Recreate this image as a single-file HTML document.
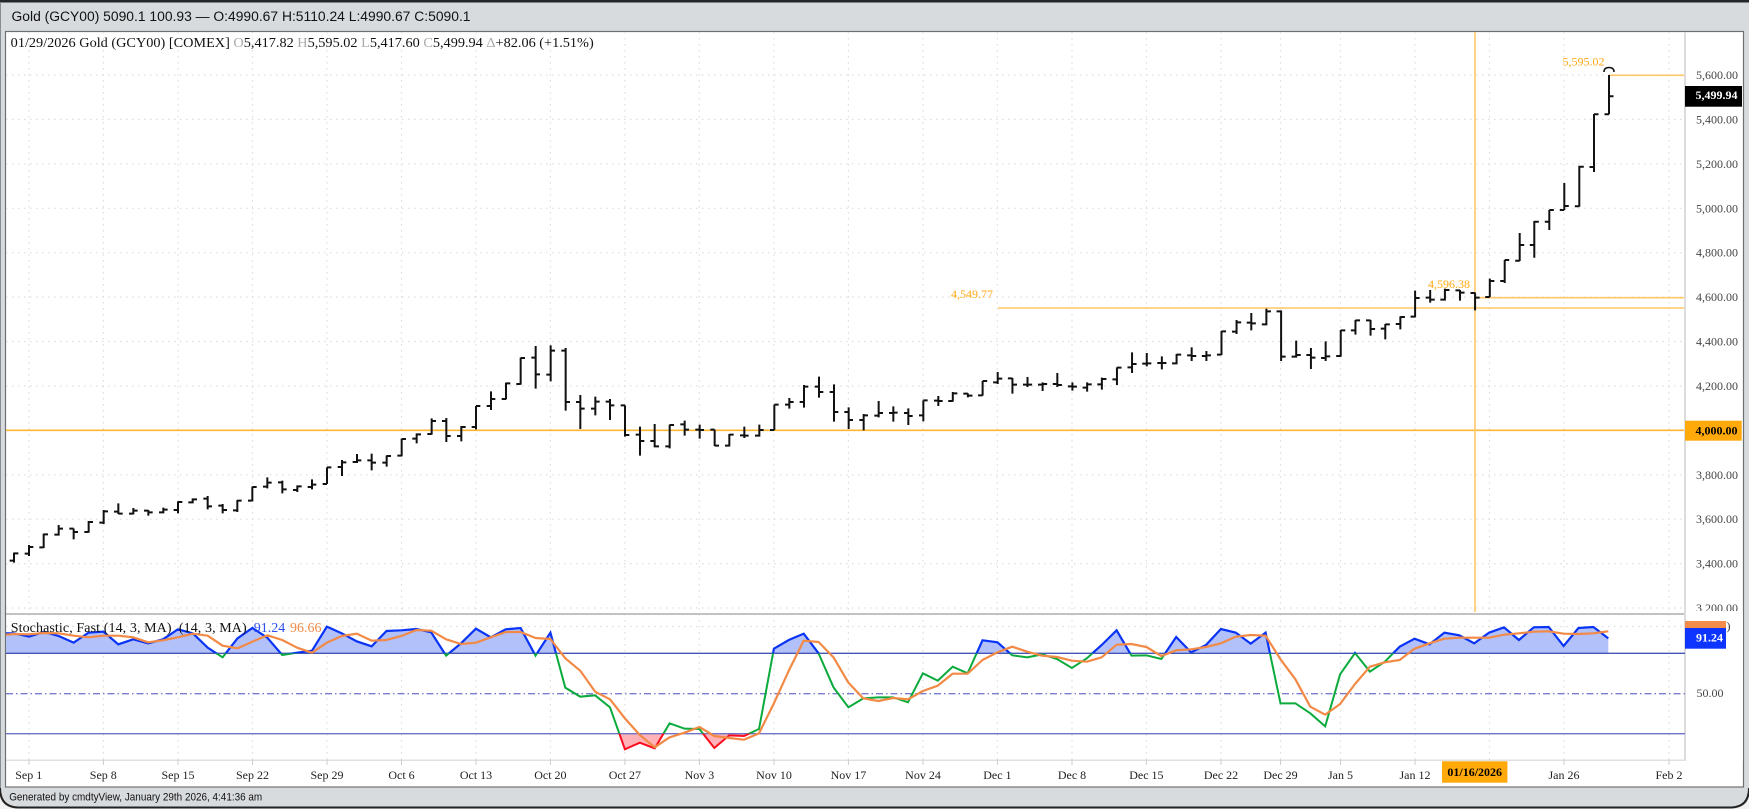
<!DOCTYPE html>
<html><head><meta charset="utf-8"><title>Gold (GCY00)</title>
<style>
html,body{margin:0;padding:0;background:#f2f2f2;width:1749px;height:809px;overflow:hidden}
svg{display:block;position:absolute;left:0;top:0;filter:blur(.35px)}
text{font-family:"Liberation Serif",serif;font-size:12px;fill:#333}
.s{font-family:"Liberation Sans",sans-serif;fill:#111}
.v{vector-effect:non-scaling-stroke}
.d text{text-anchor:middle;fill:#222}
.a text{text-anchor:end;fill:#444}
.o{fill:#ffa812}
</style></head><body>
<svg width="1749" height="809" viewBox="0 0 1749 809" xmlns="http://www.w3.org/2000/svg">
<defs>
<clipPath id="cb"><rect x="5" y="0" width="1680" height="160"/></clipPath>
<clipPath id="cg"><rect x="5" y="160" width="1680" height="241"/></clipPath>
<clipPath id="cr"><rect x="5" y="401" width="1680" height="100"/></clipPath>
</defs>
<!-- frame -->
<path d="M0 0H1749V792Q1749 808 1733 808H16Q1 808 0 792Z" fill="#d8dbde"/>
<path d="M0 788Q0 807 18 807.5H1731Q1749 807 1749 788" fill="none" stroke="#222" stroke-width="2"/>
<rect x="0" y="0" width="1749" height="2.5" fill="#24262a"/>
<rect x="0" y="2" width="1" height="786" fill="#8a8d90"/>
<rect x="5.5" y="31.5" width="1738" height="755.5" fill="#fff" stroke="#6e7174" stroke-width="1.2"/>
<text class="s" x="11.5" y="21" style="font-size:13.5px" textLength="459" lengthAdjust="spacingAndGlyphs">Gold (GCY00) 5090.1 100.93 — O:4990.67 H:5110.24 L:4990.67 C:5090.1</text>
<text class="s" x="9.2" y="800.5" style="font-size:11px" textLength="253" lengthAdjust="spacingAndGlyphs">Generated by cmdtyView, January 29th 2026, 4:41:36 am</text>

<!-- grid -->
<g stroke="#dedede" stroke-width="1.2" stroke-dasharray="1.5 4.5" fill="none">
<path d="M29 32V760M103.4 32V760M178 32V760M252.5 32V760M327 32V760M401.5 32V760M476 32V760M550.4 32V760M624.9 32V760M699.4 32V760M774 32V760M848.4 32V760M923 32V760M997.4 32V760M1072 32V760M1146.4 32V760M1221 32V760M1280.5 32V760M1340.5 32V760M1415 32V760M1489.5 32V760M1564 32V760M1669 32V760"/>
<path d="M6 75H1685M6 119.4H1685M6 163.8H1685M6 208.3H1685M6 252.7H1685M6 297.1H1685M6 341.5H1685M6 385.9H1685M6 474.8H1685M6 519.2H1685M6 563.6H1685M6 608H1685M6 626.5H1685"/>
</g>

<!-- gold lines -->
<g fill="none" stroke-width="1.6">
<path d="M6 430.3H1685" stroke="#ffb733"/>
<path d="M998 308H1685M1475 297.7H1685M1609 75.3H1685M1475 32V612" stroke="#ffc766"/>
</g>

<!-- price bars -->
<g fill="none" stroke="#111" stroke-width="2">
<g transform="translate(0,340) scale(.33333)">
<path class="v" d="M42 638V668M29 662H42M42 640H55M87 615V648M74 641H87M87 621H100M131 581V624M118 622H131M131 583H144M176 555V587M163 584H176M176 566H189M221 566V598M208 566H221M221 576H234M266 543V578M253 576H266M266 546H279M311 510V552M298 548H311M311 514H324M355 490V522M342 515H355M355 521H368M400 504V523M387 521H400M400 512H413M445 510V527M432 512H445M445 517H458M490 503V520M477 517H490M490 509H503M534 484V520M521 510H534M534 486H547M578 475V490M565 487H578M578 478H591M623 468V508M610 476H623M623 499H636M668 492V520M655 497H668M668 510H681M712 480V516M699 511H712M712 482H725M757 440V484M744 482H757M757 441H770M802 412V445M789 440H802M802 428H815M847 422V460M834 427H847M847 448H860M892 436V456M879 450H892M892 439H905M936 418V448M923 441H936M936 434H949M981 382V432M968 432H981M981 382H994M1026 360V408M1013 381H1026M1026 367H1039M1071 342V369M1058 366H1071M1071 361H1084M1115 341V391M1102 361H1115M1115 368H1128M1160 346V380M1147 368H1160M1160 348H1173M1205 296V349M1192 347H1205M1205 297H1218M1250 280V310M1237 296H1250M1250 283H1263M1295 235V284M1282 282H1295M1295 243H1308M1339 234V306M1326 243H1339M1339 288H1352M1384 258V304M1371 288H1384M1384 261H1397M1428 198V268M1415 261H1428M1428 198H1441M1473 154V210M1460 198H1473M1473 177H1486"/>
</g>
<g transform="translate(450,320) scale(.33333)">
<path class="v" d="M168 188V238M155 237H168M168 190H181M212 113V194M199 192H212M212 114H225M257 78V206M244 113H257M257 163H270M302 76V184M289 164H302M302 92H315M347 84V272M334 92H347M347 246H360M391 225V327M378 246H391M391 266H404M436 230V286M423 266H436M436 245H449M480 237V300M467 245H480M480 256H493M525 256V350M512 256H525M525 345H538M570 320V407M557 344H570M570 363H583M614 312V382M601 363H614M614 379H627M659 314V385M646 379H659M659 315H672M704 302V347M691 313H704M704 329H717M749 314V356M736 329H749M749 330H762M794 329V378M781 329H794M794 377H807M838 342V379M825 377H838M838 344H851M883 320V354M870 346H883M883 347H896M928 314V350M915 347H928M928 330H941M973 254V330M960 330H973M973 254H986M1018 234V266M1005 254H1018M1018 246H1031M1062 195V263M1049 246H1062M1062 200H1075M1107 170V233M1094 200H1107M1107 216H1120M1152 193V305M1139 216H1152M1152 276H1165M1196 262V327M1183 276H1196M1196 300H1209M1241 282V331M1228 300H1241M1241 286H1254M1286 243V292M1273 287H1286M1286 279H1299M1330 259V305M1317 279H1330M1330 278H1343M1375 265V315M1362 279H1375M1375 288H1388M1420 241V304M1407 286H1420M1420 241H1433M1465 228V258M1452 242H1465M1465 243H1478"/>
</g>
<g transform="translate(950,250) scale(.35075,.33333)">
<path class="v" d="M8 426V455M-5 453H8M8 430H21M51 430V442M38 431H51M51 437H64M93 393V437M80 436H93M93 393H106M136 366V402M123 397H136M136 386H149M178 384V431M165 385H178M178 404H191M221 381V411M208 404H221M221 404H234M264 397V423M251 404H264M264 402H277M306 369V411M293 402H306M306 405H319M349 397V422M336 409H349M349 410H362M391 397V425M378 413H391M391 403H404M433 383V419M420 403H433M433 387H446M476 352V405M463 388H476M476 353H489M519 307V369M506 352H519M519 342H532M561 309V349M548 341H561M561 340H574M604 319V358M591 339H604M604 339H617M646 312V343M633 340H646M646 314H659M689 292V333M676 316H689M689 318H702M731 303V333M718 318H731M731 316H744M774 243V315M761 314H774M774 244H787M817 210V252M804 245H817M817 217H830M859 189V241M846 218H859M859 220H872M902 176V226M889 223H902M902 184H915M944 181V333M931 184H944M944 320H957M987 272V323M974 320H987M987 315H1000M1029 294V357M1016 315H1029M1029 323H1042M1071 274V333M1058 324H1071M1071 319H1084M1114 240V320M1101 318H1114M1114 241H1127M1156 210V254M1143 241H1156M1156 211H1169M1199 210V257M1186 211H1199M1199 237H1212M1241 222V268M1228 236H1241M1241 223H1254M1284 199V238M1271 222H1284M1284 201H1297M1326 122V202M1313 200H1326M1326 144H1339M1369 120V158M1356 143H1369M1369 149H1382M1411 116V152M1398 149H1411M1411 120H1424M1454 120V152M1441 121H1454M1454 128H1467M1497 128V181M1484 129H1497M1497 143H1510M1539 86V141M1526 141H1539M1539 93H1552"/>
</g>
<path d="M1504.7 260V283M1500.2 281H1504.7M1504.7 260H1509.2M1519.7 233V261M1515.2 260.7H1519.7M1519.7 245H1524.2M1534.3 221V257.7M1529.8 245H1534.3M1534.3 221.7H1538.8M1549.3 210V230M1544.8 221.7H1549.3M1549.3 210H1553.8M1564.3 183V210M1559.8 210H1564.3M1564.3 206H1568.8M1579.3 165.7V206.7M1574.8 206.3H1579.3M1579.3 166.7H1583.8M1594 114V172M1589.5 167H1594M1594 114.3H1598.5M1609 75V114.3M1604.5 114.3H1609M1609 96.3H1613.5"/>
<path d="M1604 72Q1604 67.5 1609 67.5Q1614 67.5 1614 72" stroke-width="1.6"/>
</g>

<!-- chart labels -->
<text x="10.7" y="47" style="font-size:14px;fill:#111" textLength="583" lengthAdjust="spacingAndGlyphs">01/29/2026 Gold (GCY00) [COMEX] <tspan fill="#aaa">O</tspan>5,417.82 <tspan fill="#aaa">H</tspan>5,595.02 <tspan fill="#aaa">L</tspan>5,417.60 <tspan fill="#aaa">C</tspan>5,499.94 <tspan fill="#aaa">Δ</tspan>+82.06 (+1.51%)</text>
<text class="o" x="1562.5" y="65.5">5,595.02</text>
<text class="o" x="951" y="298">4,549.77</text>
<text class="o" x="1428" y="288">4,596.38</text>

<!-- price axis -->
<rect x="1684" y="32" width="2" height="729" fill="#dcdcdc"/>
<g class="a">
<text x="1738" y="79">5,600.00</text>
<text x="1738" y="123.4">5,400.00</text>
<text x="1738" y="167.8">5,200.00</text>
<text x="1738" y="212.3">5,000.00</text>
<text x="1738" y="256.7">4,800.00</text>
<text x="1738" y="301.1">4,600.00</text>
<text x="1738" y="345.5">4,400.00</text>
<text x="1738" y="389.9">4,200.00</text>
<text x="1738" y="478.8">3,800.00</text>
<text x="1738" y="523.2">3,600.00</text>
<text x="1738" y="567.6">3,400.00</text>
<text x="1738" y="612">3,200.00</text>
</g>
<rect x="1685" y="86" width="57" height="20.7" fill="#000"/>
<text x="1737.5" y="98.8" style="fill:#fff;font-weight:bold;text-anchor:end">5,499.94</text>
<rect x="1685" y="420.7" width="56.7" height="20" fill="#ffa90a"/>
<text x="1737.5" y="434.5" style="fill:#000;font-weight:bold;text-anchor:end">4,000.00</text>

<!-- stochastic panel -->
<rect x="1686" y="611" width="57" height="150" fill="#fff"/>
<rect x="6" y="613" width="1678" height="2" fill="#c2c2c2"/>
<rect x="6" y="759.5" width="1680" height="1.5" fill="#e0e0e0"/>
<path d="M29 760v5M103.4 760v5M178 760v5M252.5 760v5M327 760v5M401.5 760v5M476 760v5M550.4 760v5M624.9 760v5M699.4 760v5M774 760v5M848.4 760v5M923 760v5M997.4 760v5M1072 760v5M1146.4 760v5M1221 760v5M1280.5 760v5M1340.5 760v5M1415 760v5M1564 760v5M1669 760v5" stroke="#ccc" fill="none"/>

<g transform="translate(0,600) scale(1,.33333)">
<path clip-path="url(#cb)" fill="#b3c1fb" d="M6 100L14 100 29 110 43.8 96 58.7 108 73.6 128 88.5 98 103.4 95 118.3 133 133.2 118 148.1 130 163 118 177.9 88 192.8 100 207.7 143 222.6 172 237.5 115 252.4 84 267.3 113 282.2 165 297.1 158 312 152 326.9 80 341.8 100 356.7 124 371.6 139 386.5 93 401.4 91 416.3 87 431.2 97 446.1 167 461 130 475.9 86 490.8 112 505.7 88 520.6 84 535.5 167 550.4 98 565.3 263 580.2 290 595.1 286 610 322 624.9 448 639.8 428 654.7 445 669.6 370 684.5 386 699.4 387 714.3 444 729.2 406 744.1 408 759 387 773.9 146 788.8 120 803.7 101 818.6 160 833.5 262 848.4 322 863.3 295 878.2 292 893.1 292 908 307 922.9 220 937.8 242 952.7 200 967.6 220 982.5 121 997.4 127 1012.3 166 1027.2 172 1042.1 163 1057 177 1071.9 204 1086.8 175 1101.7 135 1116.6 91 1131.5 167 1146.4 166 1161.3 177 1176.2 111 1191.1 157 1206 135 1220.9 87 1235.8 98 1250.7 131 1265.6 98 1280.5 310 1295.4 310 1310.3 340 1325.2 379 1340.1 223 1355 159 1369.9 215 1384.8 185 1399.7 140 1414.6 116 1429.5 133 1444.4 98 1459.3 106 1474.2 130 1489.1 98 1504 82 1518.9 120 1533.8 82 1548.7 81 1563.6 138 1578.5 84 1593.4 81 1608.3 115V160H6Z"/>
<path clip-path="url(#cr)" fill="#ffb3b8" d="M610 322L624.9 448 639.8 428 654.7 445 669.6 370 684.5 386 699.4 387 714.3 444 729.2 406 744.1 408 759 387V401H610Z"/>
<path class="v" fill="none" stroke="#4656b4" stroke-width="1.4" d="M6 160H1685"/>
<path class="v" fill="none" stroke="#6f73c8" stroke-width="1.3" d="M6 401H1685"/>
<path class="v" fill="none" stroke="#7a7ed0" stroke-width="1.3" stroke-dasharray="7 3 1.5 3" d="M6 281H1685"/>
<path class="v" clip-path="url(#cb)" fill="none" stroke="#0a34f5" stroke-width="2.2" d="M6 100L14 100 29 110 43.8 96 58.7 108 73.6 128 88.5 98 103.4 95 118.3 133 133.2 118 148.1 130 163 118 177.9 88 192.8 100 207.7 143 222.6 172 237.5 115 252.4 84 267.3 113 282.2 165 297.1 158 312 152 326.9 80 341.8 100 356.7 124 371.6 139 386.5 93 401.4 91 416.3 87 431.2 97 446.1 167 461 130 475.9 86 490.8 112 505.7 88 520.6 84 535.5 167 550.4 98 565.3 263 580.2 290 595.1 286 610 322 624.9 448 639.8 428 654.7 445 669.6 370 684.5 386 699.4 387 714.3 444 729.2 406 744.1 408 759 387 773.9 146 788.8 120 803.7 101 818.6 160 833.5 262 848.4 322 863.3 295 878.2 292 893.1 292 908 307 922.9 220 937.8 242 952.7 200 967.6 220 982.5 121 997.4 127 1012.3 166 1027.2 172 1042.1 163 1057 177 1071.9 204 1086.8 175 1101.7 135 1116.6 91 1131.5 167 1146.4 166 1161.3 177 1176.2 111 1191.1 157 1206 135 1220.9 87 1235.8 98 1250.7 131 1265.6 98 1280.5 310 1295.4 310 1310.3 340 1325.2 379 1340.1 223 1355 159 1369.9 215 1384.8 185 1399.7 140 1414.6 116 1429.5 133 1444.4 98 1459.3 106 1474.2 130 1489.1 98 1504 82 1518.9 120 1533.8 82 1548.7 81 1563.6 138 1578.5 84 1593.4 81 1608.3 115"/>
<path class="v" clip-path="url(#cg)" fill="none" stroke="#0aab3c" stroke-width="2" d="M6 100L14 100 29 110 43.8 96 58.7 108 73.6 128 88.5 98 103.4 95 118.3 133 133.2 118 148.1 130 163 118 177.9 88 192.8 100 207.7 143 222.6 172 237.5 115 252.4 84 267.3 113 282.2 165 297.1 158 312 152 326.9 80 341.8 100 356.7 124 371.6 139 386.5 93 401.4 91 416.3 87 431.2 97 446.1 167 461 130 475.9 86 490.8 112 505.7 88 520.6 84 535.5 167 550.4 98 565.3 263 580.2 290 595.1 286 610 322 624.9 448 639.8 428 654.7 445 669.6 370 684.5 386 699.4 387 714.3 444 729.2 406 744.1 408 759 387 773.9 146 788.8 120 803.7 101 818.6 160 833.5 262 848.4 322 863.3 295 878.2 292 893.1 292 908 307 922.9 220 937.8 242 952.7 200 967.6 220 982.5 121 997.4 127 1012.3 166 1027.2 172 1042.1 163 1057 177 1071.9 204 1086.8 175 1101.7 135 1116.6 91 1131.5 167 1146.4 166 1161.3 177 1176.2 111 1191.1 157 1206 135 1220.9 87 1235.8 98 1250.7 131 1265.6 98 1280.5 310 1295.4 310 1310.3 340 1325.2 379 1340.1 223 1355 159 1369.9 215 1384.8 185 1399.7 140 1414.6 116 1429.5 133 1444.4 98 1459.3 106 1474.2 130 1489.1 98 1504 82 1518.9 120 1533.8 82 1548.7 81 1563.6 138 1578.5 84 1593.4 81 1608.3 115"/>
<path class="v" clip-path="url(#cr)" fill="none" stroke="#fb0d1e" stroke-width="2" d="M610 322L624.9 448 639.8 428 654.7 445 669.6 370 684.5 386 699.4 387 714.3 444 729.2 406 744.1 408 759 387"/>
<path class="v" fill="none" stroke="#f28a45" stroke-width="2.2" stroke-linejoin="round" d="M6 104L14 102 29 103 43.8 99 58.7 100 73.6 107 88.5 112 103.4 107 118.3 107 133.2 112 148.1 127 163 121 177.9 112 192.8 101 207.7 107 222.6 137 237.5 145 252.4 125 267.3 106 282.2 120 297.1 143 312 158 326.9 128 341.8 108 356.7 101 371.6 122 386.5 120 401.4 108 416.3 90 431.2 92 446.1 118 461 132 475.9 128 490.8 112 505.7 96 520.6 96 535.5 114 550.4 117 565.3 175 580.2 212 595.1 275 610 298 624.9 355 639.8 405 654.7 442 669.6 412 684.5 398 699.4 381 714.3 408 729.2 414 744.1 419 759 400 773.9 310 788.8 212 803.7 122 818.6 126 833.5 172 848.4 248 863.3 295 878.2 303 893.1 294 908 298 922.9 273 937.8 257 952.7 221 967.6 221 982.5 180 997.4 157 1012.3 140 1027.2 155 1042.1 167 1057 171 1071.9 182 1086.8 185 1101.7 172 1116.6 134 1131.5 132 1146.4 141 1161.3 168 1176.2 151 1191.1 148 1206 141 1220.9 130 1235.8 110 1250.7 105 1265.6 107 1280.5 178 1295.4 238 1310.3 320 1325.2 344 1340.1 312 1355 252 1369.9 200 1384.8 187 1399.7 180 1414.6 146 1429.5 130 1444.4 116 1459.3 113 1474.2 113 1489.1 113 1504 104 1518.9 100 1533.8 95 1548.7 94 1563.6 101 1578.5 102 1593.4 100 1608.3 94"/>
</g>

<text x="10.7" y="632" style="font-size:14px;fill:#111" xml:space="preserve" textLength="236" lengthAdjust="spacing">Stochastic, Fast (14, 3, MA)  (14, 3, MA)</text>
<text x="253.7" y="632" style="font-size:14px;fill:#2b50f0">91.24</text>
<text x="290" y="632" style="font-size:14px;fill:#f28a45">96.66</text>
<rect x="1685" y="621" width="41" height="8" fill="#f28c4a"/>
<rect x="1685" y="628" width="41" height="20.7" fill="#0d35ff"/>
<text x="1726.5" y="630" style="fill:#333">)</text>
<text x="1696" y="641.7" style="fill:#fff;font-weight:bold">91.24</text>
<text x="1696.5" y="697" style="fill:#444">50.00</text>

<!-- date axis -->
<g class="d">
<text x="28.7" y="779">Sep 1</text>
<text x="103.3" y="779">Sep 8</text>
<text x="178" y="779">Sep 15</text>
<text x="252.5" y="779">Sep 22</text>
<text x="327" y="779">Sep 29</text>
<text x="401.5" y="779">Oct 6</text>
<text x="476" y="779">Oct 13</text>
<text x="550.4" y="779">Oct 20</text>
<text x="624.9" y="779">Oct 27</text>
<text x="699.4" y="779">Nov 3</text>
<text x="774" y="779">Nov 10</text>
<text x="848.4" y="779">Nov 17</text>
<text x="923" y="779">Nov 24</text>
<text x="997.4" y="779">Dec 1</text>
<text x="1072" y="779">Dec 8</text>
<text x="1146.4" y="779">Dec 15</text>
<text x="1221" y="779">Dec 22</text>
<text x="1280.5" y="779">Dec 29</text>
<text x="1340.5" y="779">Jan 5</text>
<text x="1415" y="779">Jan 12</text>
<text x="1564" y="779">Jan 26</text>
<text x="1669" y="779">Feb 2</text>
</g>
<rect x="1442" y="761.3" width="65.4" height="21.4" fill="#ffa90a"/>
<text x="1474.7" y="776" style="fill:#000;font-weight:bold;text-anchor:middle">01/16/2026</text>
</svg>
</body></html>
